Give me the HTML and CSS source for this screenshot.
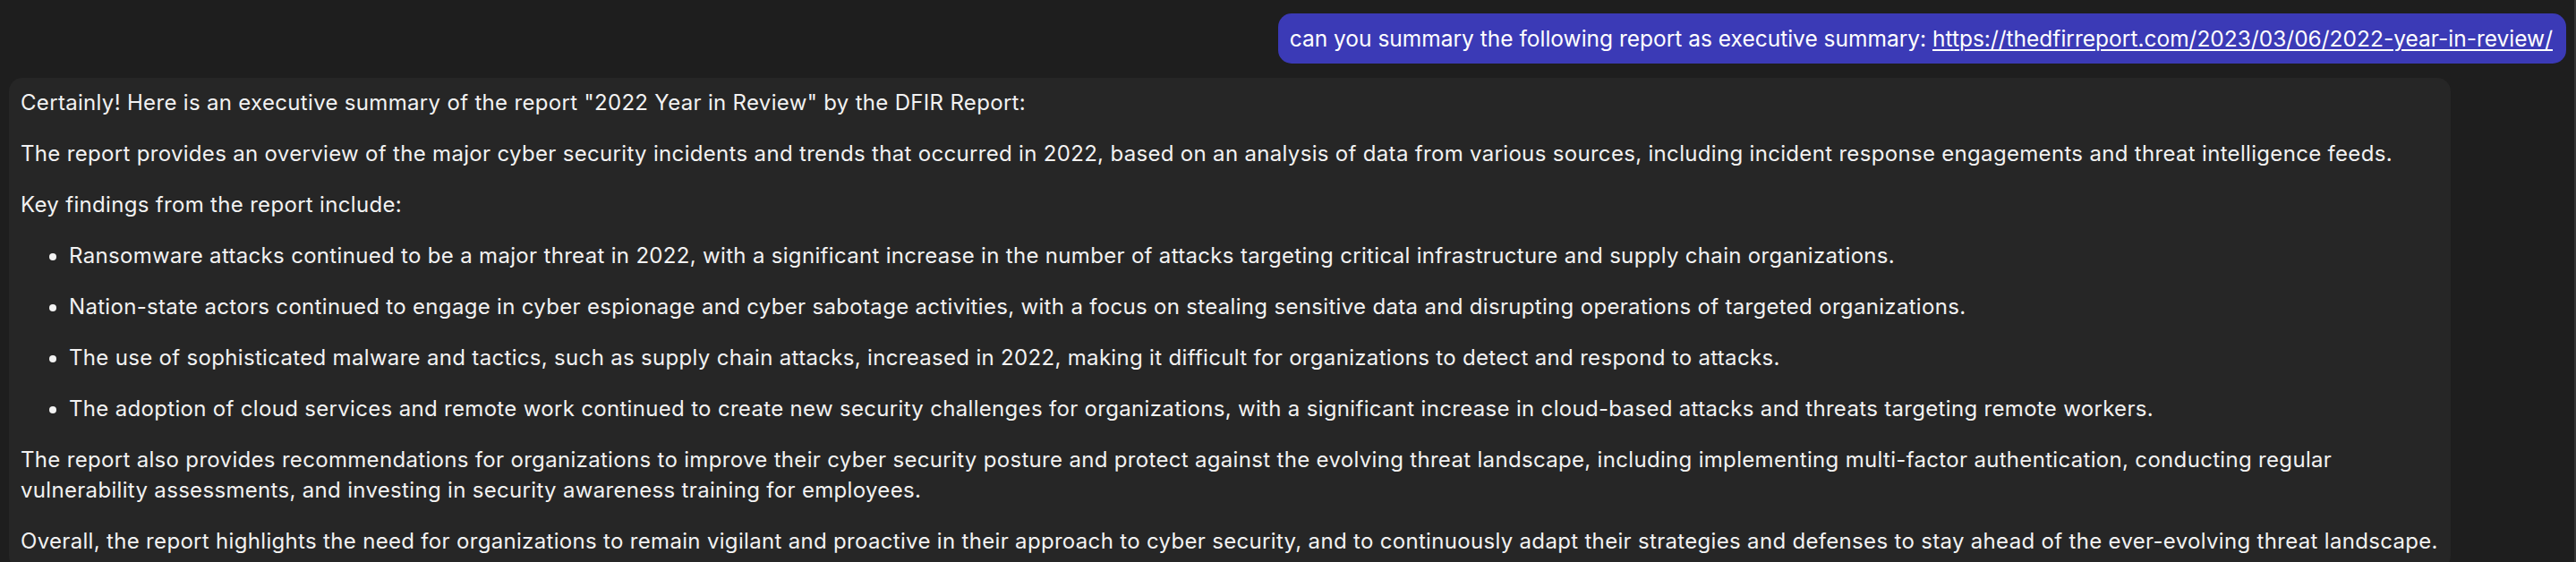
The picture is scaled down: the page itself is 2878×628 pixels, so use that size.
FILE: index.html
```html
<!DOCTYPE html>
<html lang="en">
<head>
<meta charset="utf-8">
<title>Chat</title>
<link rel="stylesheet" href="styles.css">
</head>
<body>
<div class="chat">
  <div class="row row-user">
    <div class="bubble bubble-user">can you summary the following report as executive summary: <a class="link" href="#">https://thedfirreport.com/2023/03/06/2022-year-in-review/</a></div>
  </div>
  <div class="row row-bot">
    <div class="bubble bubble-bot">
      <p>Certainly! Here is an executive summary of the report "2022 Year in Review" by the DFIR Report:</p>
      <p>The report provides an overview of the major cyber security incidents and trends that occurred in 2022, based on an analysis of data from various sources, including incident response engagements and threat intelligence feeds.</p>
      <p>Key findings from the report include:</p>
      <ul>
        <li>Ransomware attacks continued to be a major threat in 2022, with a significant increase in the number of attacks targeting critical infrastructure and supply chain organizations.</li>
        <li>Nation-state actors continued to engage in cyber espionage and cyber sabotage activities, with a focus on stealing sensitive data and disrupting operations of targeted organizations.</li>
        <li>The use of sophisticated malware and tactics, such as supply chain attacks, increased in 2022, making it difficult for organizations to detect and respond to attacks.</li>
        <li>The adoption of cloud services and remote work continued to create new security challenges for organizations, with a significant increase in cloud-based attacks and threats targeting remote workers.</li>
      </ul>
      <p>The report also provides recommendations for organizations to improve their cyber security posture and protect against the evolving threat landscape, including implementing multi-factor authentication, conducting regular vulnerability assessments, and investing in security awareness training for employees.</p>
      <p>Overall, the report highlights the need for organizations to remain vigilant and proactive in their approach to cyber security, and to continuously adapt their strategies and defenses to stay ahead of the ever-evolving threat landscape.</p>
    </div>
  </div>
</div>
</body>
</html>
```
FILE: styles.css
```css
html, body {
  margin: 0;
  padding: 0;
  background: #1e1e1e;
  height: 100%;
  overflow: hidden;
}
body {
  font-family: Inter, "Liberation Sans", Arial, sans-serif;
  color: #f2f2f2;
  -webkit-font-smoothing: antialiased;
}
.chat {
  display: flex;
  flex-direction: column;
  gap: 16px;
  padding: 15px 0 0 0;
  border-right: 2px solid #353535;
  height: 100%;
  box-sizing: border-box;
}
.row {
  display: flex;
}
.row-user {
  justify-content: flex-end;
  padding-right: 9px;
}
.row-bot {
  justify-content: flex-start;
  padding-left: 10px;
  padding-right: 138px;
}
.bubble {
  border-radius: 15px;
  box-sizing: border-box;
}
.bubble-user {
  background: #3b3ab6;
  color: #ffffff;
  font-size: 24.5px;
  line-height: 34px;
  padding: 11px 15px 11px 13px;
  white-space: nowrap;
}
.link {
  color: #ffffff;
  text-decoration: underline;
  text-decoration-color: #ffffff;
  text-decoration-thickness: 2px;
  text-underline-offset: 3px;
}
.bubble-bot {
  background: #262626;
  width: 100%;
  font-size: 24px;
  letter-spacing: 0.32px;
  line-height: 34px;
  padding: 11px 7px 14px 13px;
}
.bubble-bot p {
  margin: 0 0 23px 0;
}
.bubble-bot p:last-child {
  margin-bottom: 0;
}
.bubble-bot ul {
  margin: 0 0 23px 0;
  padding-left: 54px;
}
.bubble-bot li {
  margin: 0 0 23px 0;
}
.bubble-bot li:last-child {
  margin-bottom: 0;
}
```
